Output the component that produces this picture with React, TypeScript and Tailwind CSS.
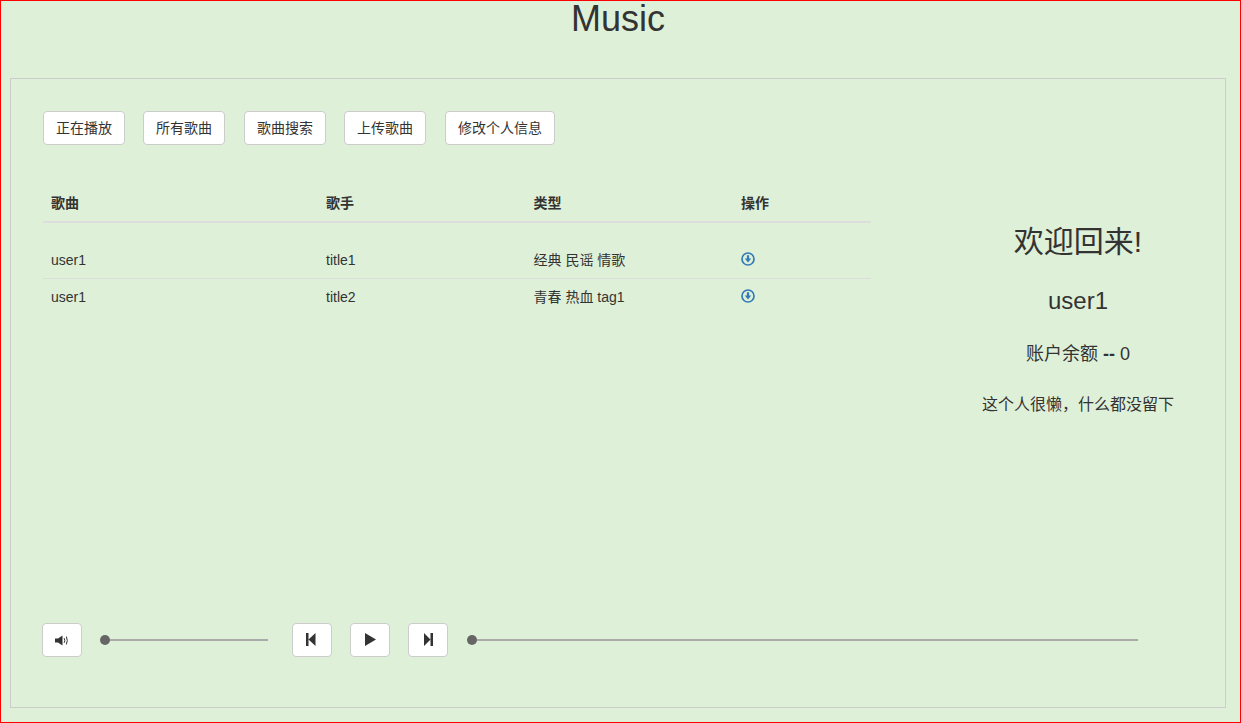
const FONT = "font-['Liberation_Sans','Noto_Sans_CJK_SC',sans-serif]";

function Btn({ children, w }: { children: React.ReactNode; w: string }) {
  return (
    <button className={`${w} h-[34px] flex items-center justify-center bg-white border border-[#ccc] rounded text-[14px] leading-[20px] text-[#333]`}>
      {children}
    </button>
  );
}

function DownloadIcon() {
  return (
    <svg width="14" height="14" viewBox="0 0 14 14" className="block">
      <circle cx="7" cy="7" r="6" fill="none" stroke="#337ab7" strokeWidth="1.7" />
      <path d="M5.9 3.2h2.2v3.4h2.1L7 10.4 3.8 6.6h2.1z" fill="#337ab7" />
    </svg>
  );
}

function Slider({ w }: { w: string }) {
  return (
    <div className={`${w} flex items-center`}>
      <div className="w-[10px] h-[10px] rounded-full bg-[#666] shrink-0" />
      <div className="flex-1 h-[2px] bg-[#aaa]" />
    </div>
  );
}

const rows = [
  ["user1", "title1", "经典 民谣 情歌"],
  ["user1", "title2", "青春 热血 tag1"],
];
const cols = "grid grid-cols-[275px_207.5px_207.5px_1fr]";

export default function App() {
  return (
    <div className={`${FONT} w-full h-[723px] border border-[#f00] bg-[#dff0d8] text-[#333] pl-[9px] pr-[14px] flex flex-col`}>
      <h1 className="text-[36px] leading-[36px] text-center font-normal">Music</h1>
      <div className="mt-[41px] h-[630px] border border-[#ccc] pt-[32px] pl-[32px] pr-[32px] pb-[50px] flex flex-col">
        <div className="flex">
          <Btn w="w-[82px]">正在播放</Btn>
          <div className="ml-[18px]"><Btn w="w-[82px]">所有歌曲</Btn></div>
          <div className="ml-[19px]"><Btn w="w-[82px]">歌曲搜索</Btn></div>
          <div className="ml-[18px]"><Btn w="w-[82px]">上传歌曲</Btn></div>
          <div className="ml-[19px]"><Btn w="w-[110px]">修改个人信息</Btn></div>
        </div>

        <div className="flex mt-[40px]">
          <div className="w-[828px] text-[14px] leading-[20px]">
            <div className={`${cols} border-b-2 border-[#ddd] font-bold`}>
              {["歌曲", "歌手", "类型", "操作"].map((h) => (
                <div key={h} className="p-2">{h}</div>
              ))}
            </div>
            <div className="mt-[19px]">
              {rows.map((r, i) => (
                <div key={i} className={`${cols} ${i === 0 ? "border-b border-[#ddd]" : ""}`}>
                  {r.map((c, j) => (
                    <div key={j} className="p-2">{c}</div>
                  ))}
                  <div className="px-2 pt-[10px]">
                    <DownloadIcon />
                  </div>
                </div>
              ))}
            </div>
          </div>
          <div className="ml-auto w-[230px] text-center">
            <div className="mt-[40px] text-[30px] leading-[33px]">欢迎回来!</div>
            <div className="mt-[30px] text-[24px] leading-[26px]">user1</div>
            <div className="mt-[30px] text-[18px] leading-[20px]">账户余额 <span className="font-bold">--</span> 0</div>
            <div className="mt-[32px] text-[16px] leading-[18px]">这个人很懒，什么都没留下</div>
          </div>
        </div>

        <div className="mt-auto flex items-center -ml-px">
          <Btn w="w-[40px]">
            <svg width="14" height="11" viewBox="0 0 14 11">
              <path d="M0 3.5h3L7.5 .5v10L3 7.5H0z" fill="#333" />
              <path d="M9.2 3.2q1.2 2.3 0 4.6" fill="none" stroke="#333" strokeWidth="1" />
              <path d="M11.3 1.5q2 4 0 8" fill="none" stroke="#333" strokeWidth="1" />
            </svg>
          </Btn>
          <div className="ml-[18px]"><Slider w="w-[168px]" /></div>
          <div className="ml-[24px]">
            <Btn w="w-[40px]">
              <svg width="10" height="13" viewBox="0 0 10 13" className="-ml-[2px] -mt-[1px]">
                <path d="M0 0h2.5v13H0zM2.5 6.5 9.5 0v13z" fill="#333" />
              </svg>
            </Btn>
          </div>
          <div className="ml-[18px]">
            <Btn w="w-[40px]">
              <svg width="11" height="13" viewBox="0 0 11 13" className="ml-[1px] -mt-[1px]">
                <path d="M0 0l11 6.5L0 13z" fill="#333" />
              </svg>
            </Btn>
          </div>
          <div className="ml-[18px]">
            <Btn w="w-[40px]">
              <svg width="9" height="13" viewBox="0 0 9 13" className="ml-[1px] -mt-[1px]">
                <path d="M0 0l6.5 6.5V0H9v13H6.5V6.5L0 13z" fill="#333" />
              </svg>
            </Btn>
          </div>
          <div className="ml-[19px]"><Slider w="w-[671px]" /></div>
        </div>
      </div>
    </div>
  );
}
